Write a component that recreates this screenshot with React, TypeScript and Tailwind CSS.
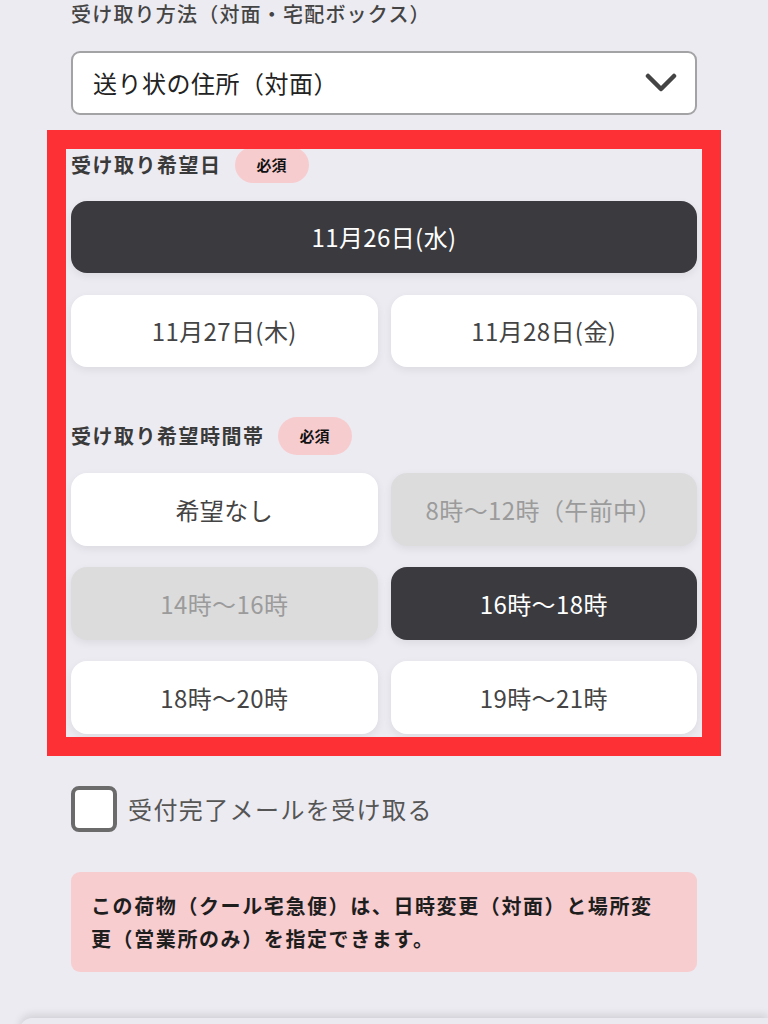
import React from "react";

const font = "font-['Noto_Sans_CJK_JP','Noto_Sans',sans-serif]";

type Slot = { label: string; state: "on" | "off" | "disabled" };

const timeRows: Slot[][] = [
  [
    { label: "希望なし", state: "off" },
    { label: "8時〜12時（午前中）", state: "disabled" },
  ],
  [
    { label: "14時〜16時", state: "disabled" },
    { label: "16時〜18時", state: "on" },
  ],
  [
    { label: "18時〜20時", state: "off" },
    { label: "19時〜21時", state: "off" },
  ],
];

const OptionButton = ({ label, state, className = "" }: Slot & { className?: string }) => {
  const look =
    state === "on"
      ? "bg-[#3a3a3f] text-white"
      : state === "disabled"
      ? "bg-[#dcdcdd] text-[#9b9b9b]"
      : "bg-white text-[#444]";
  return (
    <button
      className={`flex items-center justify-center rounded-[16px] text-[24px] tracking-[0.4px] shadow-[0_3px_8px_rgba(0,0,0,0.07)] ${look} ${className}`}
    >
      {label}
    </button>
  );
};

const Label = ({ text, className = "" }: { text: string; className?: string }) => (
  <div className={`flex items-center gap-[13px] ${className}`}>
    <span className="text-[20px] font-bold text-[#3a3a3a] tracking-[1.5px]">{text}</span>
    <span className="flex h-full w-[74px] items-center justify-center rounded-full bg-[#f7cccf] text-[15px] font-bold text-[#111]">
      必須
    </span>
  </div>
);

export default function App() {
  return (
    <div className={`relative min-h-[1024px] w-[768px] overflow-hidden bg-[#ecebf1] ${font}`}>
      <div className="flex flex-col px-[71px]">
        <div className="h-[28px] text-[20px] leading-[28px] font-medium text-[#444] tracking-[1.2px]">
          受け取り方法（対面・宅配ボックス）
        </div>

        <div className="mt-[23px] flex h-[64px] items-center justify-between rounded-[9px] border-2 border-[#a3a3a6] bg-white pl-[20px] pr-[18px]">
          <span className="text-[24px] text-[#222] tracking-[0.5px]">送り状の住所（対面）</span>
          <svg width="32" height="22" viewBox="0 0 32 22" fill="none">
            <path d="M3 4 L16 17 L29 4" stroke="#444" strokeWidth="4.5" strokeLinecap="round" strokeLinejoin="round" />
          </svg>
        </div>

        <Label text="受け取り希望日" className="mt-[32px] h-[36px]" />

        <OptionButton label="11月26日(水)" state="on" className="mt-[18px] h-[72px]" />
        <div className="mt-[22px] grid h-[72px] grid-cols-2 gap-[13px]">
          <OptionButton label="11月27日(木)" state="off" />
          <OptionButton label="11月28日(金)" state="off" />
        </div>

        <Label text="受け取り希望時間帯" className="mt-[50px] h-[38px]" />

        <div className="mt-[18px] flex flex-col gap-[21px]">
          {timeRows.map((row, i) => (
            <div key={i} className="grid h-[73px] grid-cols-2 gap-[13px]">
              {row.map((s) => (
                <OptionButton key={s.label} {...s} />
              ))}
            </div>
          ))}
        </div>

        <label className="mt-[52px] flex items-center gap-[11px]">
          <span className="h-[46px] w-[46px] rounded-[8px] border-[4px] border-[#6b6b6b] bg-white" />
          <span className="text-[24px] text-[#555] tracking-[1.4px]">受付完了メールを受け取る</span>
        </label>

        <div className="mt-[40px] h-[100px] rounded-[9px] bg-[#f7cdd0] pl-[20px] pr-[32px] pt-[17px] text-[20px] leading-[33px] font-bold text-[#1e1e1e] tracking-[1.6px]">
          この荷物（クール宅急便）は、日時変更（対面）と場所変更（営業所のみ）を指定できます。
        </div>
      </div>

      <div className="mt-[46px] ml-[20px] h-[20px] rounded-tl-[12px] bg-[#ebeaf0] shadow-[0_-3px_8px_rgba(0,0,0,0.12)]" />

      <div className="pointer-events-none absolute left-[47px] top-[130px] h-[626px] w-[674px] border-[19px] border-[#fd3135]" />
    </div>
  );
}
